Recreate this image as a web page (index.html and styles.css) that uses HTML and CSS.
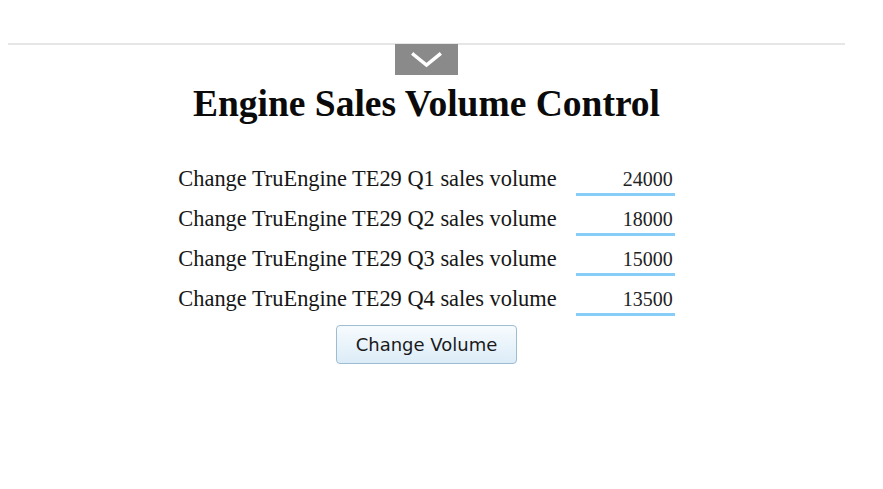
FILE: index.html
```html
<!DOCTYPE html>
<html>
<head>
<meta charset="utf-8">
<link rel="stylesheet" href="styles.css">
</head>
<body>
<div class="page">
  <div class="rule"></div>
  <div class="tab-wrap">
    <div class="tab">
      <svg width="31" height="16" viewBox="0 0 31 16"><path d="M2.5 2.5 L15.5 13 L28.5 2.5" fill="none" stroke="#fff" stroke-width="3.5" stroke-linecap="square"/></svg>
    </div>
  </div>
  <h1 class="title">Engine Sales Volume Control</h1>
  <form class="form">
    <div class="row"><label class="label">Change TruEngine TE29 Q1 sales volume</label><input class="field" type="text" value="24000"></div>
    <div class="row"><label class="label">Change TruEngine TE29 Q2 sales volume</label><input class="field" type="text" value="18000"></div>
    <div class="row"><label class="label">Change TruEngine TE29 Q3 sales volume</label><input class="field" type="text" value="15000"></div>
    <div class="row"><label class="label">Change TruEngine TE29 Q4 sales volume</label><input class="field" type="text" value="13500"></div>
    <button class="btn" type="button">Change Volume</button>
  </form>
</div>
</body>
</html>
```
FILE: styles.css
```css
html, body { margin: 0; padding: 0; background: #fff; }
body { padding: 0 8px; font-family: "Liberation Serif", "Times New Roman", serif; color: #111; }
.page { width: 837px; padding-top: 43px; }
.rule { height: 2px; background: #e6e6e6; }
.tab-wrap { display: flex; justify-content: center; margin-top: -1px; }
.tab { width: 63px; height: 31px; background: #8a8a8a; display: flex; align-items: center; justify-content: center; }
.title { margin: 7px 0 0; text-align: center; font-size: 37.5px; font-weight: bold; line-height: 44px; color: #0a0a0a; }
.form { display: flex; flex-direction: column; align-items: center; margin-top: 33px; }
.row { display: flex; align-items: baseline; gap: 19px; height: 40px; }
.label { font-size: 22.4px; line-height: 40px; color: #161616; }
.field { width: 99px; box-sizing: border-box; border: none; border-bottom: 3px solid #86cdf7; font-family: "Liberation Serif", serif; font-size: 20px; line-height: 22px; text-align: right; padding: 0 2px 3px 0; color: #222; outline: none; background: transparent; }
.btn { margin-top: 6px; width: 181px; height: 39px; border: 1px solid #9dbdd3; border-radius: 4px; background: linear-gradient(#f7fbfe, #dcecf7); font-family: "DejaVu Sans", sans-serif; font-size: 18px; color: #1a1a1a; padding: 0; }
```
